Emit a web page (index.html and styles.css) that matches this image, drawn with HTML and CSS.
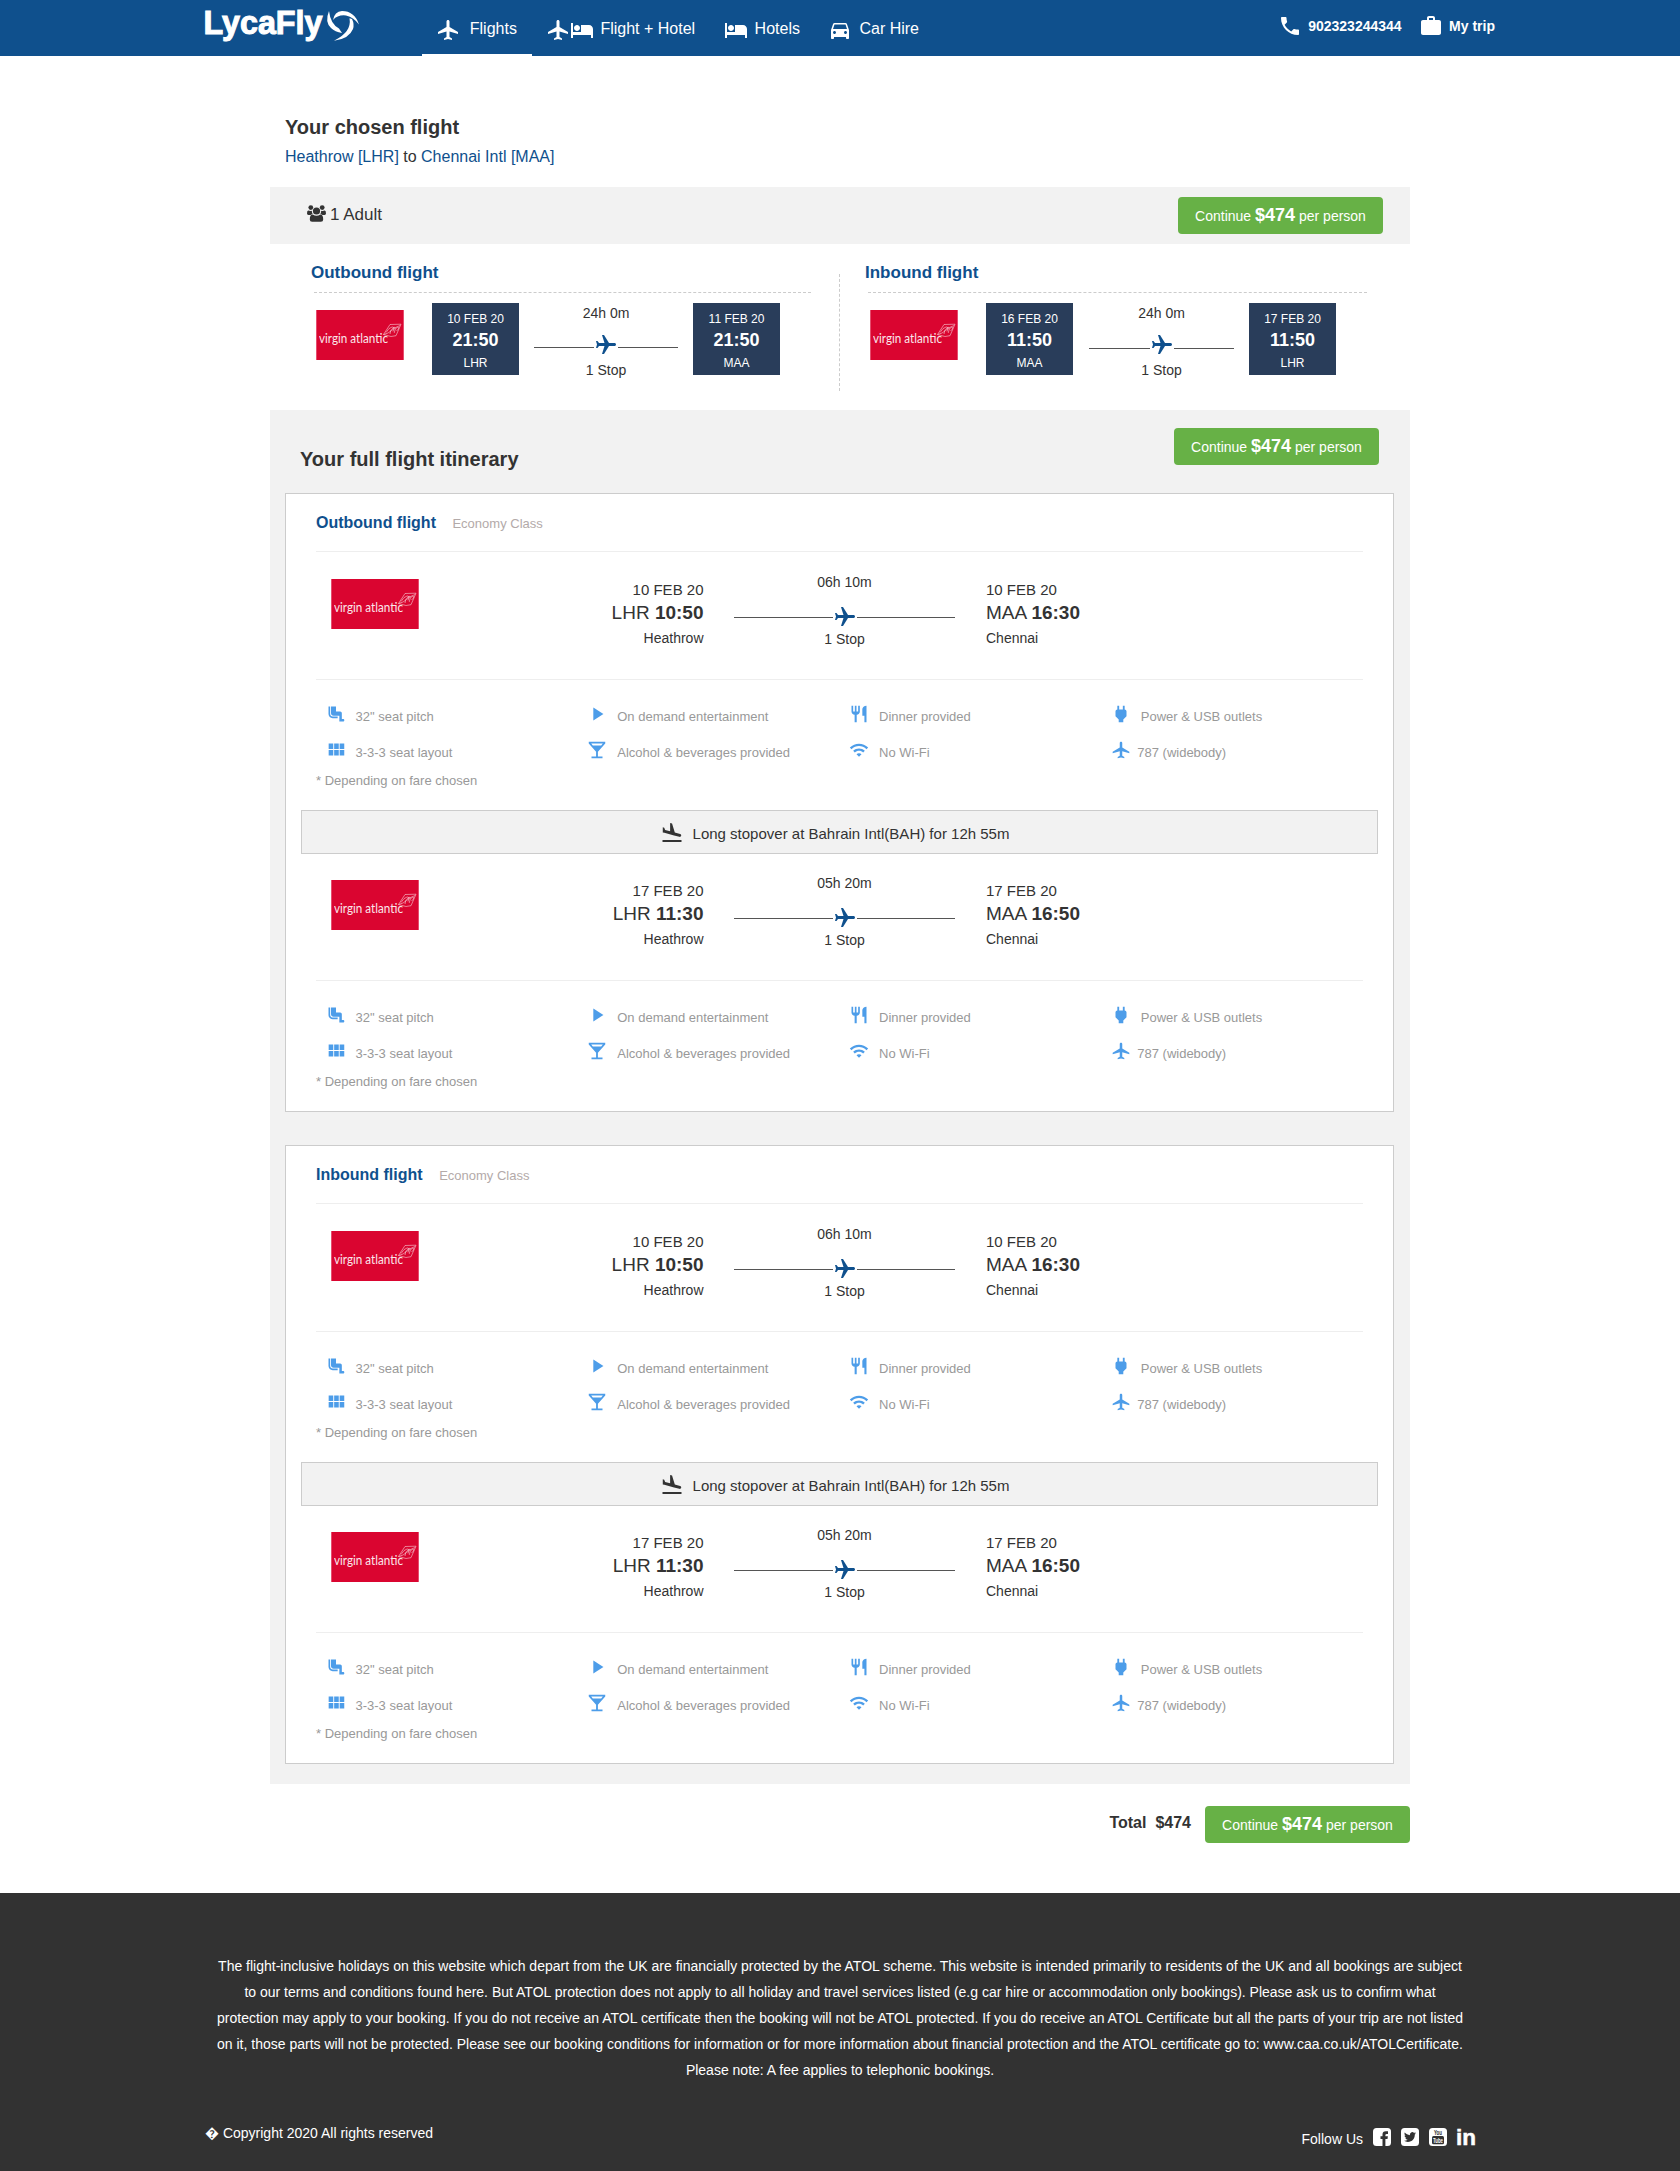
FILE: index.html
```html
<!DOCTYPE html>
<html lang="en">
<head>
<meta charset="utf-8">
<title>LycaFly - Your chosen flight</title>
<link rel="stylesheet" href="styles.css">
</head>
<body>
<svg class="sprite" aria-hidden="true">
  <symbol id="plane" viewBox="0 0 24 24"><path d="M22 16v-2l-8.5-5V3.5c0-.83-.67-1.5-1.5-1.5s-1.5.67-1.5 1.5V9L2 14v2l8.5-2.5V19L8 20.5V22l4-1 4 1v-1.5L13.5 19v-5.5L22 16z"/></symbol>
  <symbol id="plane-right" viewBox="0 0 24 24"><path transform="rotate(90 12 12)" d="M21 16v-2l-8-5V3.5c0-.83-.67-1.5-1.5-1.5S10 2.67 10 3.5V9l-8 5v2l8-2.5V19l-2 1.5V22l3.5-1 3.5 1v-1.5L13 19v-5.5l8 2.5z"/></symbol>
  <symbol id="bed" viewBox="0 0 24 24"><path d="M7 13c1.66 0 3-1.34 3-3S8.66 7 7 7s-3 1.34-3 3 1.34 3 3 3zm12-6h-8v7H3V5H1v15h2v-3h18v3h2v-9c0-2.21-1.79-4-4-4z"/></symbol>
  <symbol id="car" viewBox="0 0 24 24"><path d="M18.92 6.01C18.72 5.42 18.16 5 17.5 5h-11c-.66 0-1.21.42-1.42 1.01L3 12v8c0 .55.45 1 1 1h1c.55 0 1-.45 1-1v-1h12v1c0 .55.45 1 1 1h1c.55 0 1-.45 1-1v-8l-2.08-5.99zM6.5 16c-.83 0-1.5-.67-1.5-1.5S5.67 13 6.5 13s1.5.67 1.5 1.5S7.33 16 6.5 16zm11 0c-.83 0-1.5-.67-1.5-1.5s.67-1.5 1.5-1.5 1.5.67 1.5 1.5-.67 1.5-1.5 1.5zM5 11l1.5-4.5h11L19 11H5z"/></symbol>
  <symbol id="phone" viewBox="0 0 24 24"><path d="M6.62 10.79c1.44 2.83 3.76 5.14 6.59 6.59l2.2-2.2c.27-.27.67-.36 1.02-.24 1.12.37 2.33.57 3.57.57.55 0 1 .45 1 1V20c0 .55-.45 1-1 1-9.39 0-17-7.61-17-17 0-.55.45-1 1-1h3.5c.55 0 1 .45 1 1 0 1.25.2 2.45.57 3.57.11.35.03.74-.25 1.02l-2.2 2.2z"/></symbol>
  <symbol id="case" viewBox="0 0 24 24"><path d="M20 6h-4V4c0-1.11-.89-2-2-2h-4c-1.11 0-2 .89-2 2v2H4c-1.11 0-1.99.89-1.99 2L2 19c0 1.11.89 2 2 2h16c1.11 0 2-.89 2-2V8c0-1.11-.89-2-2-2zm-6 0h-4V4h4v2z"/></symbol>
  <symbol id="landing" viewBox="0 0 24 24"><path d="M2.5 19h19v2h-19zm7.18-5.73l4.35 1.16 5.31 1.42c.8.21 1.62-.26 1.84-1.06.21-.8-.26-1.62-1.06-1.84l-5.31-1.42-2.76-9.02L10.12 2v8.28L5.15 8.95l-.93-2.32-1.45-.39v5.17l1.6.43 5.31 1.43z"/></symbol>
  <symbol id="seat" viewBox="0 0 24 24"><path d="M5 12V3H3v9c0 2.76 2.24 5 5 5h6v-2H8c-1.66 0-3-1.34-3-3zm15.5 6H19v-7c0-1.1-.9-2-2-2h-5V3H6v8c0 1.65 1.35 3 3 3h7v7h4.5c.83 0 1.5-.67 1.5-1.5s-.67-1.5-1.5-1.5z"/></symbol>
  <symbol id="grid" viewBox="0 0 24 24"><path d="M4 11h5V5H4v6zm0 7h5v-6H4v6zm6 0h5v-6h-5v6zm6 0h5v-6h-5v6zm-6-7h5V5h-5v6zm6-6v6h5V5h-5z"/></symbol>
  <symbol id="play" viewBox="0 0 24 24"><path d="M8 5v14l11-7z"/></symbol>
  <symbol id="glass" viewBox="0 0 24 24"><path d="M21 5V3H3v2l8 9v5H6v2h12v-2h-5v-5l8-9zM7.43 7L5.66 5h12.69l-1.78 2H7.43z"/></symbol>
  <symbol id="dining" viewBox="0 0 24 24"><path d="M11 9H9V2H7v7H5V2H3v7c0 2.12 1.66 3.84 3.75 3.97V22h2.5v-9.03C11.34 12.84 13 11.12 13 9V2h-2v7zm5-3v8h2.5v8H21V2c-2.76 0-5 2.24-5 4z"/></symbol>
  <symbol id="wifi" viewBox="0 0 24 24"><path d="M1 9l2 2c4.97-4.97 13.03-4.97 18 0l2-2C16.93 2.93 7.08 2.93 1 9zm8 8l3 3 3-3c-1.65-1.66-4.34-1.66-6 0zm-4-4l2 2c2.76-2.76 7.24-2.76 10 0l2-2C15.14 9.14 8.87 9.14 5 13z"/></symbol>
  <symbol id="plug" viewBox="0 0 24 24"><path d="M16.01 7L16 3h-2v4h-4V3H8v4h-.01C7 6.99 6 7.99 6 8.99v5.49L9.5 18v3h5v-3l3.5-3.51v-5.5c0-1-1-2-1.99-1.99z"/></symbol>
  <symbol id="people" viewBox="0 0 19 17"><circle cx="3.8" cy="2.6" r="2.4"/><circle cx="15.2" cy="2.6" r="2.4"/><circle cx="9.5" cy="6" r="3.6"/><path d="M1.4 5.6Q0 5.4 0 8.6q0 1.4 1.4 1.4h2.2q.9-1 2-1.1Q4.6 7.3 4.9 5.7 3.3 6.4 1.4 5.6zM17.6 5.6Q19 5.4 19 8.6q0 1.4-1.4 1.4h-2.2q-.9-1-2-1.1 1-1.6.7-3.2 1.6.7 3.5-.1zM5.7 9.5q-2.9 0-2.9 5 0 2.3 2.3 2.3h8.8q2.3 0 2.3-2.3 0-5-2.9-5-3.8 2.7-7.6 0z"/></symbol>
  <symbol id="virgin" viewBox="0 0 88 50">
    <rect width="88" height="50" fill="#e9607f"/><rect x=".8" width="86.4" height="50" fill="#da0530"/>
    <path d="M67.5 24.5 74 14.5l11-.3-5 11.500-5 .8zM70 22.500q3-5 6-5.500t1 4.500M74 24q0-4 3-6t2 2-1 3M79.500 19q2-2.500 3-1.500t-2 3.500M67.500 24.500q5-1 8-4t8.500-5" fill="none" stroke="#fff" stroke-width=".6" opacity=".8"/>
  </symbol>
</svg>

<header class="header">
  <a class="brand" aria-label="LycaFly">
    <svg width="155" height="34" viewBox="0 0 155 34">
      <text x="-1.5" y="26" class="brand-name" textLength="119" lengthAdjust="spacingAndGlyphs">LycaFly</text>
      <path d="M124 3Q119.500 14 126 20q4 4 11 5l-3-4.500Q125.500 16 124 3zM154 16.500Q149.500 3 137 3q-7.500.5-9 9 5-5.500 13-4.500 8 2 13 9zM129 32.700q15-1.700 19-11.700 1.500-5-1-10l-2.500-.7q2.500 13.700-15.500 22.400z" fill="#fff"/>
    </svg>
  </a>
  <nav class="nav">
    <a class="nav-item nav-item--active"><svg class="ico"><use href="#plane"/></svg><span>Flights</span></a>
    <a class="nav-item nav-item--combo"><svg class="ico"><use href="#plane"/></svg><svg class="ico"><use href="#bed"/></svg><span>Flight + Hotel</span></a>
    <a class="nav-item"><svg class="ico"><use href="#bed"/></svg><span>Hotels</span></a>
    <a class="nav-item"><svg class="ico"><use href="#car"/></svg><span>Car Hire</span></a>
  </nav>
  <div class="contact">
    <a class="contact-item"><svg class="ico"><use href="#phone"/></svg><span>902323244344</span></a>
    <a class="contact-item"><svg class="ico"><use href="#case"/></svg><span>My trip</span></a>
  </div>
</header>

<main class="main">
  <h1 class="title">Your chosen flight</h1>
  <p class="subtitle"><a>Heathrow [LHR]</a> to <a>Chennai Intl [MAA]</a></p>

  <div class="guests">
    <svg class="people"><use href="#people"/></svg><span>1 Adult</span>
    <a class="btn">Continue <b>$474</b> per person</a>
  </div>

  <section class="summary">
    <div class="way">
      <h2 class="way-title">Outbound flight</h2>
      <div class="way-row">
        <svg class="airline"><use href="#virgin"/><text x="3" y="32.5" textLength="69" lengthAdjust="spacingAndGlyphs">virgin atlantic</text></svg>
        <div class="stamp"><span>10 FEB 20</span><b>21:50</b><span>LHR</span></div>
        <div class="route"><span>24h 0m</span><div class="track"><i></i><svg class="ico"><use href="#plane-right"/></svg><i></i></div><span>1 Stop</span></div>
        <div class="stamp"><span>11 FEB 20</span><b>21:50</b><span>MAA</span></div>
      </div>
    </div>
    <div class="divider"></div>
    <div class="way way--inbound">
      <h2 class="way-title">Inbound flight</h2>
      <div class="way-row">
        <svg class="airline"><use href="#virgin"/><text x="3" y="32.5" textLength="69" lengthAdjust="spacingAndGlyphs">virgin atlantic</text></svg>
        <div class="stamp"><span>16 FEB 20</span><b>11:50</b><span>MAA</span></div>
        <div class="route"><span>24h 0m</span><div class="track"><i></i><svg class="ico"><use href="#plane-right"/></svg><i></i></div><span>1 Stop</span></div>
        <div class="stamp"><span>17 FEB 20</span><b>11:50</b><span>LHR</span></div>
      </div>
    </div>
  </section>

  <section class="itinerary">
    <div class="itinerary-head">
      <h2 class="title">Your full flight itinerary</h2>
      <a class="btn">Continue <b>$474</b> per person</a>
    </div>

    <article class="card">
      <header class="card-head"><h3>Outbound flight</h3><span>Economy Class</span></header>
      <div class="segment">
        <div class="leg">
          <svg class="airline"><use href="#virgin"/><text x="3" y="32.5" textLength="69" lengthAdjust="spacingAndGlyphs">virgin atlantic</text></svg>
          <div class="point point--from"><span>10 FEB 20</span><p>LHR <b>10:50</b></p><small>Heathrow</small></div>
          <div class="route"><span>06h 10m</span><div class="track"><i></i><svg class="ico"><use href="#plane-right"/></svg><i></i></div><span>1 Stop</span></div>
          <div class="point"><span>10 FEB 20</span><p>MAA <b>16:30</b></p><small>Chennai</small></div>
        </div>
        <ul class="amenities">
          <li><svg><use href="#seat"/></svg>32" seat pitch</li>
          <li><svg class="lg"><use href="#play"/></svg>On demand entertainment</li>
          <li><svg><use href="#dining"/></svg>Dinner provided</li>
          <li><svg class="lg"><use href="#plug"/></svg>Power &amp; USB outlets</li>
          <li><svg class="lg"><use href="#grid"/></svg>3-3-3 seat layout</li>
          <li><svg class="lg"><use href="#glass"/></svg>Alcohol &amp; beverages provided</li>
          <li><svg><use href="#wifi"/></svg>No Wi-Fi</li>
          <li class="tight"><svg><use href="#plane"/></svg>787 (widebody)</li>
        </ul>
        <p class="note">* Depending on fare chosen</p>
      </div>
      <div class="stopover"><svg class="ico"><use href="#landing"/></svg><span>Long stopover at Bahrain Intl(BAH) for 12h 55m</span></div>
      <div class="segment">
        <div class="leg">
          <svg class="airline"><use href="#virgin"/><text x="3" y="32.5" textLength="69" lengthAdjust="spacingAndGlyphs">virgin atlantic</text></svg>
          <div class="point point--from"><span>17 FEB 20</span><p>LHR <b>11:30</b></p><small>Heathrow</small></div>
          <div class="route"><span>05h 20m</span><div class="track"><i></i><svg class="ico"><use href="#plane-right"/></svg><i></i></div><span>1 Stop</span></div>
          <div class="point"><span>17 FEB 20</span><p>MAA <b>16:50</b></p><small>Chennai</small></div>
        </div>
        <ul class="amenities">
          <li><svg><use href="#seat"/></svg>32" seat pitch</li>
          <li><svg class="lg"><use href="#play"/></svg>On demand entertainment</li>
          <li><svg><use href="#dining"/></svg>Dinner provided</li>
          <li><svg class="lg"><use href="#plug"/></svg>Power &amp; USB outlets</li>
          <li><svg class="lg"><use href="#grid"/></svg>3-3-3 seat layout</li>
          <li><svg class="lg"><use href="#glass"/></svg>Alcohol &amp; beverages provided</li>
          <li><svg><use href="#wifi"/></svg>No Wi-Fi</li>
          <li class="tight"><svg><use href="#plane"/></svg>787 (widebody)</li>
        </ul>
        <p class="note">* Depending on fare chosen</p>
      </div>
    </article>

    <article class="card">
      <header class="card-head"><h3>Inbound flight</h3><span>Economy Class</span></header>
      <div class="segment">
        <div class="leg">
          <svg class="airline"><use href="#virgin"/><text x="3" y="32.5" textLength="69" lengthAdjust="spacingAndGlyphs">virgin atlantic</text></svg>
          <div class="point point--from"><span>10 FEB 20</span><p>LHR <b>10:50</b></p><small>Heathrow</small></div>
          <div class="route"><span>06h 10m</span><div class="track"><i></i><svg class="ico"><use href="#plane-right"/></svg><i></i></div><span>1 Stop</span></div>
          <div class="point"><span>10 FEB 20</span><p>MAA <b>16:30</b></p><small>Chennai</small></div>
        </div>
        <ul class="amenities">
          <li><svg><use href="#seat"/></svg>32" seat pitch</li>
          <li><svg class="lg"><use href="#play"/></svg>On demand entertainment</li>
          <li><svg><use href="#dining"/></svg>Dinner provided</li>
          <li><svg class="lg"><use href="#plug"/></svg>Power &amp; USB outlets</li>
          <li><svg class="lg"><use href="#grid"/></svg>3-3-3 seat layout</li>
          <li><svg class="lg"><use href="#glass"/></svg>Alcohol &amp; beverages provided</li>
          <li><svg><use href="#wifi"/></svg>No Wi-Fi</li>
          <li class="tight"><svg><use href="#plane"/></svg>787 (widebody)</li>
        </ul>
        <p class="note">* Depending on fare chosen</p>
      </div>
      <div class="stopover"><svg class="ico"><use href="#landing"/></svg><span>Long stopover at Bahrain Intl(BAH) for 12h 55m</span></div>
      <div class="segment">
        <div class="leg">
          <svg class="airline"><use href="#virgin"/><text x="3" y="32.5" textLength="69" lengthAdjust="spacingAndGlyphs">virgin atlantic</text></svg>
          <div class="point point--from"><span>17 FEB 20</span><p>LHR <b>11:30</b></p><small>Heathrow</small></div>
          <div class="route"><span>05h 20m</span><div class="track"><i></i><svg class="ico"><use href="#plane-right"/></svg><i></i></div><span>1 Stop</span></div>
          <div class="point"><span>17 FEB 20</span><p>MAA <b>16:50</b></p><small>Chennai</small></div>
        </div>
        <ul class="amenities">
          <li><svg><use href="#seat"/></svg>32" seat pitch</li>
          <li><svg class="lg"><use href="#play"/></svg>On demand entertainment</li>
          <li><svg><use href="#dining"/></svg>Dinner provided</li>
          <li><svg class="lg"><use href="#plug"/></svg>Power &amp; USB outlets</li>
          <li><svg class="lg"><use href="#grid"/></svg>3-3-3 seat layout</li>
          <li><svg class="lg"><use href="#glass"/></svg>Alcohol &amp; beverages provided</li>
          <li><svg><use href="#wifi"/></svg>No Wi-Fi</li>
          <li class="tight"><svg><use href="#plane"/></svg>787 (widebody)</li>
        </ul>
        <p class="note">* Depending on fare chosen</p>
      </div>
    </article>
  </section>

  <div class="total">
    <b>Total</b><b>$474</b>
    <a class="btn">Continue <b>$474</b> per person</a>
  </div>
</main>

<footer class="footer">
  <p class="legal">The flight-inclusive holidays on this website which depart from the UK are financially protected by the ATOL scheme. This website is intended primarily to residents of the UK and all bookings are subject<br>to our terms and conditions found here. But ATOL protection does not apply to all holiday and travel services listed (e.g car hire or accommodation only bookings). Please ask us to confirm what<br>protection may apply to your booking. If you do not receive an ATOL certificate then the booking will not be ATOL protected. If you do receive an ATOL Certificate but all the parts of your trip are not listed<br>on it, those parts will not be protected. Please see our booking conditions for information or for more information about financial protection and the ATOL certificate go to: www.caa.co.uk/ATOLCertificate.<br>Please note: A fee applies to telephonic bookings.</p>
  <div class="footer-row">
    <span>&#xFFFD; Copyright 2020 All rights reserved</span>
    <div class="social">
      <span>Follow Us</span>
      <svg viewBox="0 0 18 18"><rect width="18" height="18" rx="3.5" fill="#fff"/><path d="M9.5 18v-7H7.5V8.2h2V6.6q0-3.3 3.3-3.3h2.2v2.6h-1.3q-1.3 0-1.3 1.2v1.1h2.5L14.5 11h-2.1v7z" fill="#323232"/></svg>
      <svg viewBox="0 0 18 18"><rect width="18" height="18" rx="3.5" fill="#fff"/><path transform="translate(3 3) scale(.5)" fill="#323232" d="M23.953 4.57a10 10 0 01-2.825.775 4.958 4.958 0 002.163-2.723c-.951.555-2.005.959-3.127 1.184a4.92 4.92 0 00-8.384 4.482C7.69 8.095 4.067 6.13 1.64 3.162a4.822 4.822 0 00-.666 2.475c0 1.71.87 3.213 2.188 4.096a4.904 4.904 0 01-2.228-.616v.06a4.923 4.923 0 003.946 4.827 4.996 4.996 0 01-2.212.085 4.936 4.936 0 004.604 3.417 9.867 9.867 0 01-6.102 2.105c-.39 0-.779-.023-1.17-.067a13.995 13.995 0 007.557 2.209c9.053 0 13.998-7.496 13.998-13.985 0-.21 0-.42-.015-.63A9.935 9.935 0 0024 4.59z"/></svg>
      <svg viewBox="0 0 18 18"><rect width="18" height="18" rx="3.5" fill="#fff"/><text x="5" y="7.3" class="yt" font-size="7.5" textLength="8" lengthAdjust="spacingAndGlyphs" fill="#323232">You</text><rect x="3" y="8" width="12" height="8.2" rx="1.5" fill="#323232"/><text x="4" y="14.8" class="yt" font-size="7.5" textLength="10" lengthAdjust="spacingAndGlyphs" fill="#fff">Tube</text></svg>
      <svg viewBox="0 0 18 18"><text x="-1" y="17" class="in" textLength="20" lengthAdjust="spacingAndGlyphs">in</text></svg>
    </div>
  </div>
</footer>
</body>
</html>
```
FILE: styles.css
```css
* { box-sizing: border-box; }
body {
  margin: 0;
  background: #fff;
  color: #333;
  font-family: "Liberation Sans", Arial, sans-serif;
  font-size: 14px;
}
h1, h2, h3, p, ul { margin: 0; padding: 0; font-weight: normal; }
svg { display: block; flex: none; }
.sprite { width: 0; height: 0; position: absolute; }
.ico { width: 24px; height: 24px; fill: currentColor; }

/* Header */
.header {
  display: flex;
  height: 56px;
  padding: 0 185px 0 205px;
  background: #0f508d;
  color: #fff;
}
.brand { width: 155px; padding-top: 8px; }
.brand svg { overflow: visible; }
.brand-name { font-size: 34px; font-weight: bold; fill: #fff; stroke: #fff; stroke-width: 1.1; }
.nav { display: flex; margin-left: 62px; font-size: 16px; }
.nav-item {
  display: flex;
  align-items: center;
  padding: 3px 14.25px 0;
  border-bottom: 2px solid transparent;
}
.nav-item .ico { margin-top: 2px; }
.nav-item span { margin-left: 7px; }
.nav-item--active { padding-right: 15.25px; border-color: #fff; }
.nav-item--active span { margin-left: 9.5px; }
.nav-item--combo span { margin-left: 6px; }
.contact { display: flex; gap: 17.5px; margin-left: auto; padding-bottom: 4px; font-weight: bold; }
.contact-item { display: flex; align-items: center; gap: 6px; }

/* Page */
.main { width: 1140px; margin: 0 auto; padding: 59px 0 50px; }
.title { font-size: 20px; line-height: 24px; font-weight: bold; }
.main > .title, .subtitle { padding-left: 15px; }
.subtitle { margin: 6px 0 18px; font-size: 16px; line-height: 24px; }
.subtitle a { color: #0f508d; }
.btn {
  width: 205px;
  height: 37px;
  line-height: 37px;
  border-radius: 4px;
  background: #67b146;
  color: #fff;
  text-align: center;
  white-space: nowrap;
}
.btn b { font-size: 18px; }
.guests {
  display: flex;
  align-items: center;
  height: 57px;
  padding: 0 27px 0 37px;
  background: #f2f2f2;
  font-size: 17px;
}
.guests span { margin-bottom: 2px; }
.guests .btn { margin-left: auto; font-size: 14px; }
.people { width: 19px; height: 17px; margin: 0 4px 4px 0; fill: #333; }

/* Summary */
.summary { display: flex; height: 166px; padding: 0 16px 0 15px; }
.way { width: 554px; padding-top: 17px; }
.way-title { margin-left: 26px; font-size: 17px; line-height: 24px; font-weight: bold; color: #0f508d; }
.divider { width: 1px; height: 117px; margin: 30px -1px 0 0; border-left: 1px dashed #ccc; }
.way-row {
  display: flex;
  width: 497px;
  margin: 7px 0 0 29px;
  padding: 10px 0 0 2px;
  border-top: 1px dashed #ccc;
}
.way--inbound .way-row { width: 499px; }
.airline { width: 88px; height: 50px; }
.airline text { font-family: Lato, sans-serif; font-size: 13.5px; fill: #fff; opacity: .9; }
.way-row .airline { margin: 7px 28px 0 0; }
.stamp {
  display: flex;
  flex-direction: column;
  align-items: center;
  width: 87px;
  height: 72px;
  padding-top: 6px;
  background: #293d5a;
  color: #fff;
  font-size: 12px;
  line-height: 20px;
}
.stamp b { font-size: 18px; line-height: 22px; }
.stamp b + span { padding-top: 2px; }
.route { display: flex; flex-direction: column; align-items: stretch; text-align: center; line-height: 18px; }
.track { display: flex; align-items: flex-start; height: 24px; color: #0f508d; }
.track i { flex: 1; height: 1px; background: #555; }
.way-row .route { width: 144px; margin: 1px 15px 0; }
.way--inbound .way-row .route { width: 145px; margin: 1px 15px 0 16px; }
.way-row .track { margin: 11px 0 4px; }
.way-row .track i { margin-top: 14px; }
.way--inbound .way-row .track i { margin-top: 15px; }

/* Itinerary */
.itinerary { padding: 0 16px 20px 15px; background: #f2f2f2; }
.itinerary-head { display: flex; justify-content: space-between; height: 83px; padding: 18px 15px 0; }
.itinerary-head .title { margin-top: 19px; }
.card { height: 619px; border: 1px solid #ccc; background: #fff; }
.card + .card { margin-top: 33px; }
.card-head {
  display: flex;
  align-items: baseline;
  gap: 16.5px;
  height: 58px;
  margin: 0 30px 2px;
  padding-top: 17px;
  border-bottom: 1px solid #eee;
  line-height: 24px;
}
.card-head h3 { font-size: 16px; font-weight: bold; color: #0f508d; }
.card-head span { font-size: 13px; color: #b3aaa9; }
.segment { height: 256px; padding: 0 30px; }
.leg { display: flex; height: 126px; padding-left: 15px; border-bottom: 1px solid #eee; }
.leg .airline { margin-top: 25px; }
.point { display: flex; flex-direction: column; padding-top: 24px; font-size: 15px; line-height: 24px; }
.point--from { width: 284.5px; align-items: flex-end; }
.point p { font-size: 19px; line-height: 22px; }
.point small { font-size: 14px; line-height: 28px; }
.leg .route { width: 221px; margin: 19px 31px 0 30.5px; }
.leg .track { margin: 14px 0 1px; }
.leg .track i { margin-top: 12px; }
.amenities {
  display: grid;
  grid-template-columns: repeat(4, 1fr);
  grid-auto-rows: 36px;
  height: 91px;
  padding-top: 18px;
  list-style: none;
  font-size: 13px;
  color: #999;
}
.amenities li { display: flex; align-items: center; padding-left: 9.5px; gap: 10px; }
.amenities li.tight { gap: 6.5px; }
.amenities svg { width: 20px; height: 20px; margin-bottom: 4px; fill: #4d9de9; }
.amenities svg.lg { width: 22px; height: 22px; margin-left: -1px; margin-right: -1px; }
.note { font-size: 13px; line-height: 20px; color: #999; }
.stopover {
  display: flex;
  align-items: center;
  justify-content: center;
  gap: 9px;
  height: 44px;
  margin: 0 15px 1px;
  padding: 2px 10px 0 0;
  border: 1px solid #ccc;
  background: #f2f2f2;
  font-size: 15px;
}
.total { display: flex; justify-content: flex-end; padding-top: 22px; }
.total > b { margin: 5px 0 0 9px; font-size: 16px; line-height: 24px; }
.total .btn { margin-left: 14px; }

/* Footer */
.footer { height: 278px; padding: 60px 205px 0; background: #323232; color: #fff; }
.legal { margin: 0 -20px; line-height: 26px; text-align: center; white-space: nowrap; }
.footer-row { display: flex; justify-content: space-between; margin-top: 40px; line-height: 20px; }
.social { display: flex; align-items: center; gap: 10px; margin-top: 2px; }
.social span { padding-top: 4px; }
.social svg { width: 18px; height: 18px; overflow: visible; }
.yt { font-weight: bold; }
.in { font-size: 22px; font-weight: bold; fill: #fff; stroke: #fff; stroke-width: .5; }
```
